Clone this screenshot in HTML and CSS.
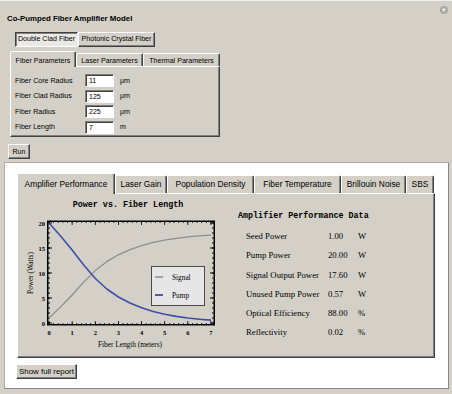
FILE: index.html
```html
<!DOCTYPE html>
<html>
<head>
<meta charset="utf-8">
<title>Co-Pumped Fiber Amplifier Model</title>
<link rel="stylesheet" href="styles.css">
</head>
<body>
<div class="window">
  <div class="header">
    <div class="title">Co-Pumped Fiber Amplifier Model</div>
    <svg class="close" viewBox="0 0 8 8" width="8" height="8"><circle cx="4" cy="4" r="4" fill="#aaa7a0"/><path d="M2.6 2.6L5.4 5.4M5.4 2.6L2.6 5.4" stroke="#fff" stroke-width="1.1"/></svg>
  </div>

  <div class="setter">
    <span class="seg pressed w63">Double Clad Fiber</span><span class="seg w77">Photonic Crystal Fiber</span>
  </div>

  <div class="tabview small">
    <div class="tabs">
      <span class="tab sel w66">Fiber Parameters</span>
      <span class="tab w67">Laser Parameters</span>
      <span class="tab w77">Thermal Parameters</span>
    </div>
    <div class="panel params">
      <span class="lbl">Fiber Core Radius</span><span class="field">11</span><span class="unit">μm</span>
      <span class="lbl">Fiber Clad Radius</span><span class="field">125</span><span class="unit">μm</span>
      <span class="lbl">Fiber Radius</span><span class="field">225</span><span class="unit">μm</span>
      <span class="lbl">Fiber Length</span><span class="field">7</span><span class="unit">m</span>
    </div>
  </div>

  <button class="btn run">Run</button>

  <div class="output">
    <div class="tabview big">
      <div class="tabs">
        <span class="tab sel w98">Amplifier Performance</span>
        <span class="tab w52">Laser Gain</span>
        <span class="tab w87">Population Density</span>
        <span class="tab w87">Fiber Temperature</span>
        <span class="tab w65">Brillouin Noise</span>
        <span class="tab w28">SBS</span>
      </div>
      <div class="panel result">
        <svg class="chart" width="210" height="162" viewBox="0 0 210 162">
          <text x="110" y="13" class="ctitle" text-anchor="middle">Power vs. Fiber Length</text>
          <rect x="29.75" y="27.25" width="166.5" height="103.5" fill="none" stroke="#000" stroke-width="1.5"/>
          <!-- ticks -->
          <line x1="30.6" y1="130" x2="196" y2="130" stroke="#000" stroke-width="2" stroke-dasharray="0.8 3.828"/>
          <line x1="30.6" y1="129" x2="196" y2="129" stroke="#000" stroke-width="4" stroke-dasharray="0.8 22.34"/>
          <line x1="30.6" y1="28" x2="196" y2="28" stroke="#000" stroke-width="2" stroke-dasharray="0.8 3.828"/>
          <line x1="30.6" y1="29" x2="196" y2="29" stroke="#000" stroke-width="4" stroke-dasharray="0.8 22.34"/>
          <line x1="31" y1="129.4" x2="31" y2="28" stroke="#000" stroke-width="2" stroke-dasharray="0.8 4.2"/>
          <line x1="32" y1="129.4" x2="32" y2="28" stroke="#000" stroke-width="4" stroke-dasharray="0.8 24.2"/>
          <line x1="195" y1="129.4" x2="195" y2="28" stroke="#000" stroke-width="2" stroke-dasharray="0.8 4.2"/>
          <line x1="194" y1="129.4" x2="194" y2="28" stroke="#000" stroke-width="4" stroke-dasharray="0.8 24.2"/>
          <!-- curves -->
          <polyline fill="none" stroke="#8e8e8e" stroke-width="1.3" stroke-linejoin="round"
            points="31,124 42.57,112.9 54.14,100.95 65.71,88.15 77.28,76.6 88.85,67.65 100.42,60.8 111.99,55.7 123.56,51.6 135.13,48.4 146.7,46.05 158.27,44.3 169.84,42.85 181.41,41.85 192.98,41.05"/>
          <polyline fill="none" stroke="#3d4fa6" stroke-width="1.6" stroke-linejoin="round"
            points="31,29 42.57,42 54.14,56 65.71,71 77.28,84.5 88.85,95 100.42,103 111.99,109 123.56,113.75 135.13,117.5 146.7,120.25 158.27,122.35 169.84,124 181.41,125.2 192.98,126.15"/>
          <!-- legend -->
          <rect x="133.5" y="72.5" width="53" height="39" fill="#e6e6e6" stroke="#4a4a4a" stroke-width="1"/>
          <line x1="137" y1="83" x2="145" y2="83" stroke="#8e8e8e" stroke-width="1.5"/>
          <text x="154" y="85.5" class="leg">Signal</text>
          <line x1="137" y1="101" x2="145" y2="101" stroke="#3d4fa6" stroke-width="1.8"/>
          <text x="154" y="103.5" class="leg">Pump</text>
          <!-- tick labels -->
          <g class="tl" text-anchor="end">
            <text x="27" y="131.5">0</text>
            <text x="27" y="106.5">5</text>
            <text x="27" y="81.5">10</text>
            <text x="27" y="56.5">15</text>
            <text x="27" y="31.5">20</text>
          </g>
          <g class="tl" text-anchor="middle">
            <text x="31" y="141">0</text>
            <text x="54.14" y="141">1</text>
            <text x="77.28" y="141">2</text>
            <text x="100.42" y="141">3</text>
            <text x="123.56" y="141">4</text>
            <text x="146.7" y="141">5</text>
            <text x="169.84" y="141">6</text>
            <text x="192.98" y="141">7</text>
          </g>
          <text x="112" y="153" class="ax" text-anchor="middle">Fiber Length (meters)</text>
          <text x="0" y="0" class="ax" text-anchor="middle" transform="translate(14.5 79) rotate(-90)">Power (Watts)</text>
        </svg>
        <div class="data">
          <div class="dtitle">Amplifier Performance Data</div>
          <div class="dgrid">
            <span>Seed Power</span><span>1.00</span><span>W</span>
            <span>Pump Power</span><span>20.00</span><span>W</span>
            <span>Signal Output Power</span><span>17.60</span><span>W</span>
            <span>Unused Pump Power</span><span>0.57</span><span>W</span>
            <span>Optical Efficiency</span><span>88.00</span><span>%</span>
            <span>Reflectivity</span><span>0.02</span><span>%</span>
          </div>
        </div>
      </div>
    </div>
    <button class="btn report">Show full report</button>
  </div>
</div>
</body>
</html>
```

FILE: styles.css
```css
* { box-sizing: border-box; }
html, body { margin: 0; padding: 0; }
body {
  width: 452px;
  height: 394px;
  background: #d4d0c8;
  font-family: "Liberation Sans", Arial, sans-serif;
  color: #000;
  overflow: hidden;
}
.window {
  height: 394px;
  border-top: 1px solid #efede8;
  display: flex;
  flex-direction: column;
  align-items: flex-start;
}
.header {
  align-self: stretch;
  display: flex;
  justify-content: space-between;
  align-items: flex-start;
  padding: 5px 4px 0 7px;
}
.title {
  font-weight: bold;
  font-size: 7.8px;
  line-height: 10px;
  margin-top: 8px;
  white-space: nowrap;
}
.close { display: block; }

/* setter bar */
.setter {
  display: flex;
  margin: 8px 0 0 15px;
}
.seg {
  display: block;
  font-size: 7.1px;
  line-height: 13px;
  height: 15px;
  text-align: center;
  white-space: nowrap;
  border: 1px solid;
  border-color: #fff #404040 #404040 #fff;
  box-shadow: inset -1px -1px #808080;
  background: #d4d0c8;
}
.seg.pressed {
  border-color: #404040 #fff #fff #404040;
  box-shadow: inset 1px 1px #808080;
  background: #ebe9e4;
}

/* widths */
.w28 { width: 28px; }
.w52 { width: 52px; }
.w63 { width: 63px; }
.w65 { width: 65px; }
.w66 { width: 66px; }
.w67 { width: 67px; }
.w77 { width: 77px; }
.w87 { width: 87px; }
.w98 { width: 98px; }

/* tab views */
.tabview { display: flex; flex-direction: column; }
.tabs { display: flex; align-items: flex-end; }
.tab {
  display: block;
  text-align: center;
  white-space: nowrap;
  background: #d4d0c8;
  border: 1px solid;
  border-bottom: none;
  border-color: #fff #404040 transparent #fff;
  box-shadow: inset -1px 0 #808080;
  border-radius: 2px 2px 0 0;
}
.tab.sel {
  margin-bottom: -1px;
  position: relative;
  z-index: 1;
}
.panel {
  background: #d4d0c8;
  border: 1px solid;
  border-color: #fff #404040 #404040 #fff;
  box-shadow: inset -1px -1px #808080;
}

.tabview.small { margin: 4px 0 0 10px; width: 210px; }
.small .tabs { height: 15px; }
.small .tab { font-size: 7.1px; line-height: 10px; height: 13px; padding-top: 2px; }
.small .tab.sel { height: 16px; padding-top: 4px; }

.params {
  height: 71px;
  padding: 7px 4px 0 4px;
  display: grid;
  grid-template-columns: 64px 29px auto;
  grid-auto-rows: 13px;
  column-gap: 6px;
  row-gap: 2.6px;
  align-items: center;
  font-size: 7.1px;
}
.lbl, .unit { white-space: nowrap; line-height: 10px; }
.field {
  height: 13px;
  background: #fff;
  border: 1px solid;
  border-color: #808080 #fff #fff #808080;
  box-shadow: inset 1px 1px #404040;
  padding-left: 3px;
  font-size: 7px;
  line-height: 11px;
}

/* buttons */
.btn {
  font-family: "Liberation Sans", Arial, sans-serif;
  color: #000;
  padding: 0;
  background: #d4d0c8;
  border: 1px solid;
  border-color: #fff #404040 #404040 #fff;
  box-shadow: inset -1px -1px #808080;
  white-space: nowrap;
}
.run {
  margin: 7px 0 0 8px;
  width: 22px;
  height: 15px;
  font-size: 7.1px;
}
.report {
  margin: 6px 0 0 -1px;
  width: 61px;
  height: 15px;
  font-size: 7.9px;
}

/* output cell */
.output {
  margin: 3px 0 0 4px;
  width: 445px;
  height: 227px;
  background: #fff;
  border: 1px solid;
  border-color: #b0aca4 #8a8780 #8a8780 #b0aca4;
  padding: 10px 0 0 12px;
  display: flex;
  flex-direction: column;
  align-items: flex-start;
}
.big .tabs { height: 20px; }
.big .tab { font-size: 8.4px; line-height: 11px; height: 18px; padding-top: 3px; }
.big .tab.sel { height: 21px; padding-top: 5px; }
.result {
  width: 418px;
  height: 165px;
  display: flex;
  align-items: flex-start;
}
.chart { display: block; flex: none; }
.ctitle {
  font-family: "Liberation Mono", "Courier New", monospace;
  font-weight: bold;
  font-size: 8.4px;
}
.leg, .ax {
  font-family: "Liberation Serif", "Times New Roman", serif;
  font-size: 7.3px;
}
.tl {
  font-family: "Liberation Serif", "Times New Roman", serif;
  font-weight: bold;
  font-size: 6.5px;
}
.data { margin: 17px 0 0 10px; }
.dtitle {
  font-family: "Liberation Mono", "Courier New", monospace;
  font-weight: bold;
  font-size: 8.4px;
  line-height: 10px;
  white-space: nowrap;
}
.dgrid {
  margin: 5.7px 0 0 8px;
  display: grid;
  grid-template-columns: 82px 30px auto;
  grid-auto-rows: 19.2px;
  align-items: center;
  font-family: "Liberation Serif", "Times New Roman", serif;
  font-size: 8.7px;
  white-space: nowrap;
}
```
